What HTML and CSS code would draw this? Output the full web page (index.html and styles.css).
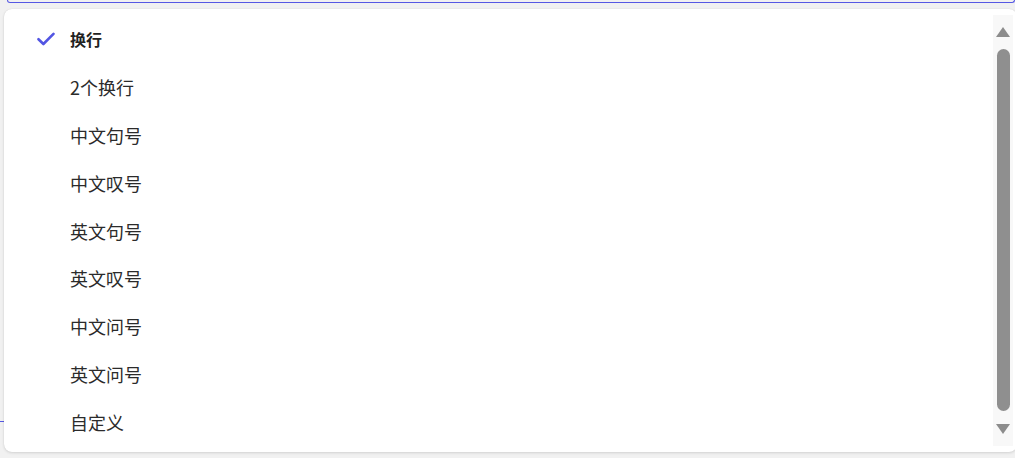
FILE: index.html
```html
<!DOCTYPE html>
<html lang="zh-CN">
<head>
<meta charset="utf-8">
<link rel="stylesheet" href="styles.css">
</head>
<body>
<div class="page">
  <div class="input-top"></div>
  <div class="field-behind"></div>
  <div class="dropdown">
    <ul class="options">
      <li class="option selected">
        <span class="check"><svg width="18" height="14" viewBox="0 0 18 14"><path d="M1.5 7.2 L6.4 12 L16.5 1.8" fill="none" stroke="#5255e3" stroke-width="2.6" stroke-linecap="round" stroke-linejoin="round"/></svg></span>
        <span class="label">换行</span>
      </li>
      <li class="option"><span class="check"></span><span class="label">2个换行</span></li>
      <li class="option"><span class="check"></span><span class="label">中文句号</span></li>
      <li class="option"><span class="check"></span><span class="label">中文叹号</span></li>
      <li class="option"><span class="check"></span><span class="label">英文句号</span></li>
      <li class="option"><span class="check"></span><span class="label">英文叹号</span></li>
      <li class="option"><span class="check"></span><span class="label">中文问号</span></li>
      <li class="option"><span class="check"></span><span class="label">英文问号</span></li>
      <li class="option"><span class="check"></span><span class="label">自定义</span></li>
    </ul>
    <div class="scrollbar">
      <div class="arrow up"></div>
      <div class="thumb"></div>
      <div class="arrow down"></div>
    </div>
  </div>
</div>
</body>
</html>
```

FILE: styles.css
```css
html, body {
  margin: 0;
  padding: 0;
}
body {
  background: #f1f1f1;
  font-family: "Noto Sans CJK SC", "Noto Sans", sans-serif;
  width: 1015px;
  height: 458px;
  overflow: hidden;
}
.page {
  position: relative;
  width: 1015px;
  height: 458px;
}
.input-top {
  margin-left: 7px;
  height: 2px;
  border: 1px solid #5658e4;
  border-top: none;
  border-radius: 0 0 6px 6px;
  background: #f1f1f1;
}
.field-behind {
  margin-top: 418px;
  width: 8px;
  height: 1px;
  background: #5658e4;
}
.dropdown {
  position: absolute;
  left: 4px;
  top: 9px;
  width: 1013px;
  height: 443px;
  box-sizing: border-box;
  background: #fff;
  border-radius: 8px;
  box-shadow: 0 1px 3px rgba(0,0,0,0.12), 0 0 1px rgba(0,0,0,0.12);
  display: flex;
  padding: 6px 4px 6px 0;
}
.options {
  list-style: none;
  margin: 0;
  padding: 0;
  flex: 1;
}
.option {
  height: 47.9px;
  display: flex;
  align-items: center;
  padding-left: 33px;
  font-size: 18px;
  color: #2b2b2b;
}
.check {
  width: 33px;
  display: flex;
  align-items: center;
}
.check svg { display: block; }
.selected .label {
  font-size: 16px;
  font-weight: 700;
  color: #222;
}
.scrollbar {
  width: 20px;
  background: #f8f8f8;
  display: flex;
  flex-direction: column;
  align-items: center;
  padding-top: 12px;
  box-sizing: border-box;
}
.arrow {
  width: 0;
  height: 0;
  border-left: 7px solid transparent;
  border-right: 7px solid transparent;
}
.arrow.up {
  border-bottom: 10px solid #8c8c8c;
}
.arrow.down {
  border-top: 10px solid #8c8c8c;
}
.thumb {
  width: 13px;
  height: 362px;
  margin: 12px 0 13px;
  background: #8f8f8f;
  border-radius: 7px;
}
```
